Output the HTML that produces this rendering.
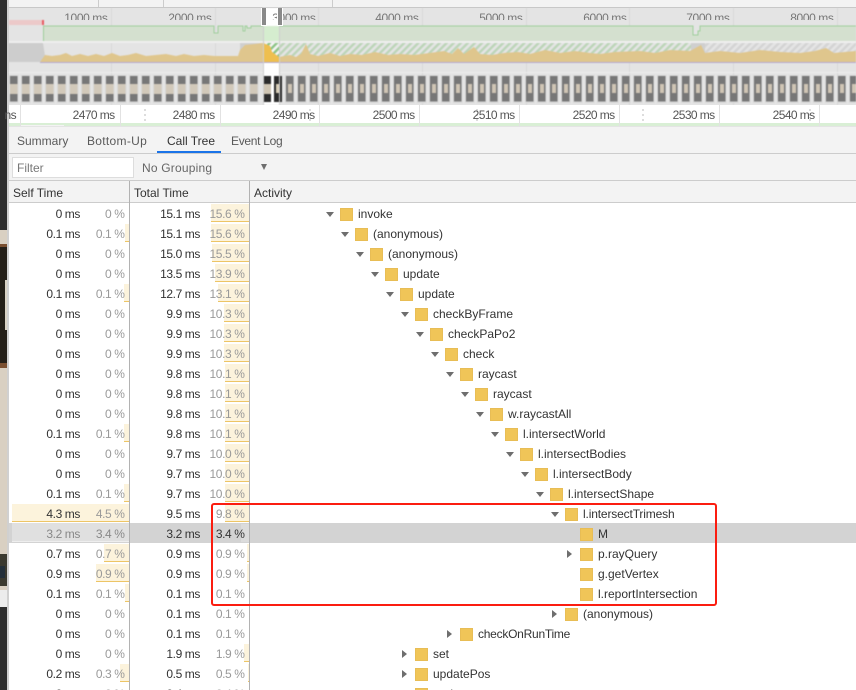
<!DOCTYPE html>
<html><head><meta charset="utf-8"><style>
html,body{margin:0;padding:0;background:#fff}
body{width:856px;height:690px;overflow:hidden;position:relative;font:12px "Liberation Sans",sans-serif;color:#333}
div,span,i{position:absolute;display:block}
i{font-style:normal}
.r{left:0;width:856px;height:20px}
.r span{top:3px;white-space:nowrap;line-height:14px}
.r span.c1,.r span.c2,.r span.c3,.r span.c4{letter-spacing:-.4px}
.c1{right:776px}.c2{right:731.5px;color:#999}.c3{right:656px}.c4{right:611.5px;color:#999}
.sb,.tb{top:0;height:17px;background:#fcf3dc;border-bottom:1px solid #edc566}
.sb{right:727px}.tb{right:607px}
.f{top:4px;width:11px;height:11px;background:#f0c558;border:1px solid #e8bd55}
.d{top:8px;width:0;height:0;border-left:4px solid transparent;border-right:4px solid transparent;border-top:5px solid #6e6e6e}
.a{top:6px;width:0;height:0;border-top:4px solid transparent;border-bottom:4px solid transparent;border-left:5px solid #6e6e6e}
.o{top:8px;height:12px;line-height:20px;overflow:hidden;color:#777;white-space:nowrap;text-align:right;width:60px;letter-spacing:-.4px}
.t{top:108px;color:#555;text-align:right;width:60px;line-height:14px;letter-spacing:-.6px}
.v{top:105px;width:1px;height:21px;background:#e2e2e2}
.tab{top:134px;color:#5a5a5a;line-height:14px;white-space:nowrap}
</style></head><body>

<!-- left strip -->
<div style="left:0;top:0;width:7px;height:690px;background:#2e2e2e"></div>
<div style="left:0;top:230px;width:7px;height:360px;background:#d9d0c2"></div>
<div style="left:0;top:244px;width:7px;height:124px;background:#7a4f30"></div>
<div style="left:0;top:247px;width:7px;height:116px;background:#241f18"></div>
<div style="left:5px;top:280px;width:2px;height:50px;background:#d9d2c4"></div>
<div style="left:0;top:554px;width:7px;height:32px;background:#3b3a30"></div>
<div style="left:0;top:566px;width:5px;height:12px;background:#24303a"></div>
<div style="left:0;top:590px;width:7px;height:17px;background:#ececec"></div>
<div style="left:7px;top:0;width:2px;height:690px;background:#d0d0d0"></div>

<!-- top bar -->
<div style="left:9px;top:0;width:847px;height:7px;background:#f3f3f3"></div>
<div style="left:98px;top:0;width:1px;height:7px;background:#ccc"></div>
<div style="left:163px;top:0;width:1px;height:7px;background:#ccc"></div>
<div style="left:332px;top:0;width:1px;height:7px;background:#ccc"></div>
<div style="left:9px;top:7px;width:847px;height:1px;background:#c8c8c8"></div>

<!-- overview -->
<div style="left:9px;top:8px;width:847px;height:97px;background:#e4e4e4"></div>
<svg width="856" height="105" style="position:absolute;left:0;top:0;filter:blur(.4px)">
<defs>
<pattern id="gh" width="5" height="5" patternUnits="userSpaceOnUse" patternTransform="rotate(45)"><rect width="5" height="5" fill="#e4e4e4"/><rect width="2.400" height="5" fill="#bcd5b8"/></pattern>
<pattern id="wh" width="5" height="5" patternUnits="userSpaceOnUse" patternTransform="rotate(45)"><rect width="5" height="5" fill="#f4f4f4"/><rect width="2.400" height="5" fill="#8cc487"/></pattern>
<pattern id="yh" width="5" height="5" patternUnits="userSpaceOnUse" patternTransform="rotate(45)"><rect width="5" height="5" fill="#e4e4e4"/><rect width="2.400" height="5" fill="#d4d4d4"/></pattern>
<pattern id="fl" x="9" y="75" width="12" height="28" patternUnits="userSpaceOnUse"><rect width="9.500" height="28" fill="#d8d8d8"/><rect x="1" y="1" width="7.500" height="8" fill="#777"/><rect x="1" y="9" width="7.500" height="10" fill="#d2c9ba"/><rect x="1" y="19" width="7.500" height="7.500" fill="#777"/></pattern>
<pattern id="fr" x="285" y="75" width="12" height="28" patternUnits="userSpaceOnUse"><rect width="9.500" height="28" fill="#d8d8d8"/><rect x="1" y="1" width="7.500" height="25.500" fill="#777"/><rect x="3" y="9" width="4" height="9" fill="#cfc5b4"/></pattern>
</defs>
<!-- grid -->
<g fill="#d8d8d8"><rect x="111" y="8" width="1" height="97"/><rect x="215" y="8" width="1" height="97"/><rect x="318" y="8" width="1" height="97"/><rect x="422" y="8" width="1" height="97"/><rect x="526" y="8" width="1" height="97"/><rect x="629" y="8" width="1" height="97"/><rect x="733" y="8" width="1" height="97"/><rect x="837" y="8" width="1" height="97"/></g>
<rect x="9" y="41" width="847" height="2" fill="#efefef"/>
<rect x="9" y="72" width="847" height="1" fill="#ececec"/>
<!-- pink -->
<rect x="9" y="20" width="33" height="5" fill="#ecc9c9"/><rect x="42" y="20" width="2" height="5" fill="#e85c62"/>
<!-- fps -->
<path d="M43 26H214V33H218V26H243V31H245V26H247V28H251V26H263V41H43Z M279 26H693V35H698V31H700V26H856V41H279Z" fill="#d4e0cf"/>
<path d="M43.500 41V26H214V33H218V26H243V31H245V26H247V28H251V26H263M279 26H693V35H698V31H700V26H856" fill="none" stroke="#9fcf9b" stroke-width="1"/>
<rect x="263" y="26" width="16" height="15" fill="#d5edcf"/>
<!-- cpu bg -->
<path d="M8 43H43L46 62H8Z" fill="#cdcdcd"/>
<rect x="240" y="43" width="25" height="18" fill="#cfcfcf"/>
<rect x="279" y="43" width="412" height="16" fill="url(#gh)"/>
<rect x="691" y="43" width="14" height="16" fill="#cfcfcf"/>
<rect x="705" y="43" width="151" height="16" fill="url(#yh)"/>
<rect x="263" y="43" width="16" height="19" fill="url(#wh)"/>
<path d="M40 62L45 55L52 56L60 55L66 53L72 56L80 54L88 56L96 54L104 56L112 53L120 56L128 55L136 53L146 56L156 55L166 54L176 56L184 54L194 56L204 55L214 56L224 56L238 56L240 50L245 45L255 44L263 43L270 46L272 52L279 57L290 55L296 57L301 54L306 44L310 54L318 56L330 53L340 56L350 54L362 55L375 52L388 55L400 54L414 55L430 53L444 51L452 54L458 48L464 54L474 47L480 54L492 55L504 53L518 52L530 54L545 50L560 53L575 51L590 53L600 54L615 52L640 51L655 53L670 50L690 51L701 45L705 53L720 51L740 53L760 50L780 52L800 53L815 51L826 48L834 53L856 51V63H40Z" fill="#dfc68d"/>
<path d="M263 43L270 46L272 52L279 57V63H263Z" fill="#eebf4f"/>
<rect x="40" y="62" width="816" height="1" fill="#b5abd4"/>
<!-- film -->
<rect x="9" y="75" width="252" height="28" fill="url(#fl)"/>
<rect x="285" y="75" width="571" height="28" fill="url(#fr)"/>
<!-- window -->
<rect x="263" y="8" width="16" height="18" fill="#fff"/>
<rect x="263" y="63" width="16" height="42" fill="#fff"/>
<rect x="263" y="76" width="8" height="26" fill="#2c2c2c"/><rect x="263" y="84" width="8" height="10" fill="#cfc5b3"/>
<rect x="274" y="76" width="8" height="26" fill="#2c2c2c"/><rect x="276" y="84" width="4" height="9" fill="#d8cdb8"/>
<rect x="263" y="26" width="1" height="79" fill="#cfcfcf"/><rect x="279" y="26" width="1" height="79" fill="#cfcfcf"/>
</svg>
<span class="o" style="left:47.500px">1000 ms</span>
<span class="o" style="left:151.500px">2000 ms</span>
<span class="o" style="left:255.500px">3000 ms</span>
<span class="o" style="left:358.500px">4000 ms</span>
<span class="o" style="left:462.500px">5000 ms</span>
<span class="o" style="left:566.500px">6000 ms</span>
<span class="o" style="left:669.500px">7000 ms</span>
<span class="o" style="left:773.500px">8000 ms</span>
<div style="left:261px;top:8px;width:4px;height:17px;background:#8a8a8a;border:1px solid #fff;border-top:0"></div>
<div style="left:277px;top:8px;width:4px;height:17px;background:#8a8a8a;border:1px solid #fff;border-top:0"></div>

<!-- detail ruler -->
<div style="left:9px;top:105px;width:847px;height:21px;background:#fff"></div>
<div style="left:9px;top:123px;width:847px;height:3px;background:#d9efd5"></div>
<div style="left:20px;top:125px;width:44px;height:1px;background:#f3f3f3"></div>
<div style="left:9px;top:126px;width:847px;height:1px;background:#e4e4e4"></div>
<i class="v" style="left:20px"></i><i class="v" style="left:120px"></i><i class="v" style="left:220px"></i><i class="v" style="left:319px"></i><i class="v" style="left:419px"></i><i class="v" style="left:519px"></i><i class="v" style="left:619px"></i><i class="v" style="left:719px"></i><i class="v" style="left:819px"></i>
<i style="left:144px;top:109px;width:2px;height:14px;background:repeating-linear-gradient(#ddd 0 2px,#fff 2px 5px)"></i>
<i style="left:309px;top:109px;width:2px;height:14px;background:repeating-linear-gradient(#ddd 0 2px,#fff 2px 5px)"></i>
<i style="left:476px;top:109px;width:2px;height:14px;background:repeating-linear-gradient(#ddd 0 2px,#fff 2px 5px)"></i>
<i style="left:642px;top:109px;width:2px;height:14px;background:repeating-linear-gradient(#ddd 0 2px,#fff 2px 5px)"></i>
<i style="left:809px;top:109px;width:2px;height:14px;background:repeating-linear-gradient(#ddd 0 2px,#fff 2px 5px)"></i>
<span class="t" style="left:-44px">ns</span>
<span class="t" style="left:54.500px">2470 ms</span>
<span class="t" style="left:154.500px">2480 ms</span>
<span class="t" style="left:254.500px">2490 ms</span>
<span class="t" style="left:354.500px">2500 ms</span>
<span class="t" style="left:454.500px">2510 ms</span>
<span class="t" style="left:554.500px">2520 ms</span>
<span class="t" style="left:654.500px">2530 ms</span>
<span class="t" style="left:754.500px">2540 ms</span>

<!-- tabs -->
<div style="left:9px;top:127px;width:847px;height:54px;background:#f3f3f3"></div>
<span class="tab" style="left:17px">Summary</span>
<span class="tab" style="left:87px;letter-spacing:.3px">Bottom-Up</span>
<span class="tab" style="left:167px;color:#333">Call Tree</span>
<span class="tab" style="left:231px;letter-spacing:-.3px">Event Log</span>
<div style="left:157px;top:151px;width:64px;height:2px;background:#1a73e8"></div>
<div style="left:9px;top:153px;width:847px;height:1px;background:#ccc"></div>
<div style="left:12px;top:157px;width:120px;height:19px;background:#fff;border:1px solid #ddd"></div>
<span style="left:17px;top:161px;color:#777;line-height:14px">Filter</span>
<span style="left:142px;top:161px;color:#666;line-height:14px;letter-spacing:.2px">No Grouping</span>
<i style="left:261px;top:164px;width:0;height:0;border-left:3.500px solid transparent;border-right:3.500px solid transparent;border-top:6px solid #6e6e6e"></i>
<div style="left:9px;top:180px;width:847px;height:1px;background:#ccc"></div>

<!-- header -->
<div style="left:9px;top:181px;width:847px;height:21px;background:#f3f3f3"></div>
<span style="left:13px;top:186px;line-height:14px">Self Time</span>
<span style="left:134px;top:186px;line-height:14px">Total Time</span>
<span style="left:254px;top:186px;line-height:14px">Activity</span>
<div style="left:9px;top:202px;width:847px;height:1px;background:#ccc"></div>

<!-- selected row bg -->
<div style="left:9px;top:523px;width:847px;height:20px;background:#d3d3d3"></div>

<div class="r" style="top:204px"><i class="tb" style="width:38px"></i><span class="c1">0 ms</span><span class="c2">0 %</span><span class="c3">15.1 ms</span><span class="c4">15.6 %</span><i class="d" style="left:326px"></i><i class="f" style="left:340px"></i><span style="left:358px">invoke</span></div>
<div class="r" style="top:224px"><i class="sb" style="width:4px"></i><i class="tb" style="width:38px"></i><span class="c1">0.1 ms</span><span class="c2">0.1 %</span><span class="c3">15.1 ms</span><span class="c4">15.6 %</span><i class="d" style="left:341px"></i><i class="f" style="left:355px"></i><span style="left:373px">(anonymous)</span></div>
<div class="r" style="top:244px"><i class="tb" style="width:37px"></i><span class="c1">0 ms</span><span class="c2">0 %</span><span class="c3">15.0 ms</span><span class="c4">15.5 %</span><i class="d" style="left:356px"></i><i class="f" style="left:370px"></i><span style="left:388px">(anonymous)</span></div>
<div class="r" style="top:264px"><i class="tb" style="width:34px"></i><span class="c1">0 ms</span><span class="c2">0 %</span><span class="c3">13.5 ms</span><span class="c4">13.9 %</span><i class="d" style="left:371px"></i><i class="f" style="left:385px"></i><span style="left:403px">update</span></div>
<div class="r" style="top:284px"><i class="sb" style="width:5px"></i><i class="tb" style="width:31px"></i><span class="c1">0.1 ms</span><span class="c2">0.1 %</span><span class="c3">12.7 ms</span><span class="c4">13.1 %</span><i class="d" style="left:386px"></i><i class="f" style="left:400px"></i><span style="left:418px">update</span></div>
<div class="r" style="top:304px"><i class="tb" style="width:25px"></i><span class="c1">0 ms</span><span class="c2">0 %</span><span class="c3">9.9 ms</span><span class="c4">10.3 %</span><i class="d" style="left:401px"></i><i class="f" style="left:415px"></i><span style="left:433px">checkByFrame</span></div>
<div class="r" style="top:324px"><i class="tb" style="width:25px"></i><span class="c1">0 ms</span><span class="c2">0 %</span><span class="c3">9.9 ms</span><span class="c4">10.3 %</span><i class="d" style="left:416px"></i><i class="f" style="left:430px"></i><span style="left:448px">checkPaPo2</span></div>
<div class="r" style="top:344px"><i class="tb" style="width:25px"></i><span class="c1">0 ms</span><span class="c2">0 %</span><span class="c3">9.9 ms</span><span class="c4">10.3 %</span><i class="d" style="left:431px"></i><i class="f" style="left:445px"></i><span style="left:463px">check</span></div>
<div class="r" style="top:364px"><i class="tb" style="width:24px"></i><span class="c1">0 ms</span><span class="c2">0 %</span><span class="c3">9.8 ms</span><span class="c4">10.1 %</span><i class="d" style="left:446px"></i><i class="f" style="left:460px"></i><span style="left:478px">raycast</span></div>
<div class="r" style="top:384px"><i class="tb" style="width:24px"></i><span class="c1">0 ms</span><span class="c2">0 %</span><span class="c3">9.8 ms</span><span class="c4">10.1 %</span><i class="d" style="left:461px"></i><i class="f" style="left:475px"></i><span style="left:493px">raycast</span></div>
<div class="r" style="top:404px"><i class="tb" style="width:24px"></i><span class="c1">0 ms</span><span class="c2">0 %</span><span class="c3">9.8 ms</span><span class="c4">10.1 %</span><i class="d" style="left:476px"></i><i class="f" style="left:490px"></i><span style="left:508px">w.raycastAll</span></div>
<div class="r" style="top:424px"><i class="sb" style="width:5px"></i><i class="tb" style="width:24px"></i><span class="c1">0.1 ms</span><span class="c2">0.1 %</span><span class="c3">9.8 ms</span><span class="c4">10.1 %</span><i class="d" style="left:491px"></i><i class="f" style="left:505px"></i><span style="left:523px">l.intersectWorld</span></div>
<div class="r" style="top:444px"><i class="tb" style="width:24px"></i><span class="c1">0 ms</span><span class="c2">0 %</span><span class="c3">9.7 ms</span><span class="c4">10.0 %</span><i class="d" style="left:506px"></i><i class="f" style="left:520px"></i><span style="left:538px">l.intersectBodies</span></div>
<div class="r" style="top:464px"><i class="tb" style="width:24px"></i><span class="c1">0 ms</span><span class="c2">0 %</span><span class="c3">9.7 ms</span><span class="c4">10.0 %</span><i class="d" style="left:521px"></i><i class="f" style="left:535px"></i><span style="left:553px">l.intersectBody</span></div>
<div class="r" style="top:484px"><i class="sb" style="width:5px"></i><i class="tb" style="width:24px"></i><span class="c1">0.1 ms</span><span class="c2">0.1 %</span><span class="c3">9.7 ms</span><span class="c4">10.0 %</span><i class="d" style="left:536px"></i><i class="f" style="left:550px"></i><span style="left:568px">l.intersectShape</span></div>
<div class="r" style="top:504px"><i class="sb" style="width:117px"></i><i class="tb" style="width:24px"></i><span class="c1">4.3 ms</span><span class="c2">4.5 %</span><span class="c3">9.5 ms</span><span class="c4">9.8 %</span><i class="d" style="left:551px"></i><i class="f" style="left:565px"></i><span style="left:583px;letter-spacing:-.15px">l.intersectTrimesh</span></div>
<div class="r" style="top:524px"><i class="sb" style="width:117px;top:-1px;height:18px;background:#e0e0e0;border-bottom:1px solid #eee"></i><i class="tb" style="width:8px;background:#dcdcdc;border:0;height:18px"></i><span class="c1" style="color:#888">3.2 ms</span><span class="c2" style="color:#888">3.4 %</span><span class="c3">3.2 ms</span><span class="c4" style="color:#333">3.4 %</span><i class="f" style="left:580px"></i><span style="left:598px">M</span></div>
<div class="r" style="top:544px"><i class="sb" style="width:25px"></i><i class="tb" style="width:2px"></i><span class="c1">0.7 ms</span><span class="c2">0.7 %</span><span class="c3">0.9 ms</span><span class="c4">0.9 %</span><i class="a" style="left:567px"></i><i class="f" style="left:580px"></i><span style="left:598px">p.rayQuery</span></div>
<div class="r" style="top:564px"><i class="sb" style="width:33px"></i><i class="tb" style="width:2px"></i><span class="c1">0.9 ms</span><span class="c2">0.9 %</span><span class="c3">0.9 ms</span><span class="c4">0.9 %</span><i class="f" style="left:580px"></i><span style="left:598px">g.getVertex</span></div>
<div class="r" style="top:584px"><i class="sb" style="width:4px"></i><span class="c1">0.1 ms</span><span class="c2">0.1 %</span><span class="c3">0.1 ms</span><span class="c4">0.1 %</span><i class="f" style="left:580px"></i><span style="left:598px">l.reportIntersection</span></div>
<div class="r" style="top:604px"><span class="c1">0 ms</span><span class="c2">0 %</span><span class="c3">0.1 ms</span><span class="c4">0.1 %</span><i class="a" style="left:552px"></i><i class="f" style="left:565px"></i><span style="left:583px">(anonymous)</span></div>
<div class="r" style="top:624px"><span class="c1">0 ms</span><span class="c2">0 %</span><span class="c3">0.1 ms</span><span class="c4">0.1 %</span><i class="a" style="left:447px"></i><i class="f" style="left:460px"></i><span style="left:478px;letter-spacing:-.25px">checkOnRunTime</span></div>
<div class="r" style="top:644px"><i class="tb" style="width:5px"></i><span class="c1">0 ms</span><span class="c2">0 %</span><span class="c3">1.9 ms</span><span class="c4">1.9 %</span><i class="a" style="left:402px"></i><i class="f" style="left:415px"></i><span style="left:433px">set</span></div>
<div class="r" style="top:664px"><i class="sb" style="width:9px"></i><i class="tb" style="width:1px"></i><span class="c1">0.2 ms</span><span class="c2">0.3 %</span><span class="c3">0.5 ms</span><span class="c4">0.5 %</span><i class="a" style="left:402px"></i><i class="f" style="left:415px"></i><span style="left:433px">updatePos</span></div>
<div class="r" style="top:684px;height:6px;overflow:hidden"><span class="c1">0 ms</span><span class="c2">0 %</span><span class="c3">0.4 ms</span><span class="c4">0.4 %</span><i class="a" style="left:402px"></i><i class="f" style="left:415px"></i><span style="left:433px">update</span></div>

<!-- column borders -->
<div style="left:129px;top:181px;width:1px;height:509px;background:#b2b2b2"></div>
<div style="left:249px;top:181px;width:1px;height:509px;background:#b2b2b2"></div>

<!-- red box -->
<div style="left:211px;top:503px;width:502px;height:99px;border:2.500px solid #fb1d10;border-radius:3px"></div>
</body></html>
